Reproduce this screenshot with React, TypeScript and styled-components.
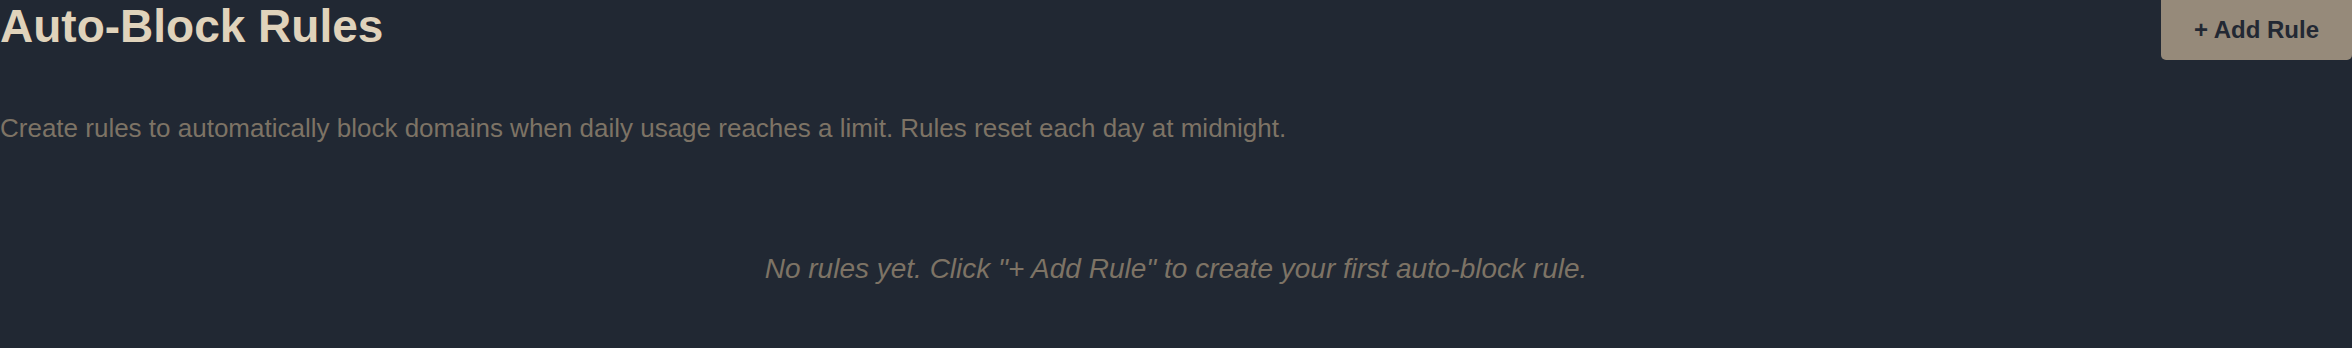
import React from "react";
import styled, { createGlobalStyle } from "styled-components";

const Global = createGlobalStyle`
  html, body {
    margin: 0;
    padding: 0;
    background: #212833;
  }
  body {
    font-family: "Liberation Sans", Arial, sans-serif;
  }
`;

const Page = styled.div`
  width: 2352px;
  height: 348px;
  background: #212833;
  box-sizing: border-box;
  overflow: hidden;
`;

const Header = styled.header`
  display: flex;
  justify-content: space-between;
  align-items: flex-start;
  height: 60px;
`;

const Title = styled.h1`
  margin: 0;
  font-size: 46px;
  font-weight: 700;
  line-height: 1.15;
  color: #e0d3bb;
`;

const AddButton = styled.button`
  height: 60px;
  padding: 0 33px;
  border: none;
  border-radius: 0 0 5px 5px;
  background: #968a7a;
  color: #222833;
  font-family: "Liberation Sans", Arial, sans-serif;
  font-size: 24px;
  font-weight: 700;
  cursor: pointer;
`;

const Description = styled.p`
  margin: 54px 0 0;
  font-size: 26px;
  line-height: 1.15;
  color: #7d7365;
`;

const EmptyState = styled.p`
  margin: 109px 0 0;
  text-align: center;
  font-size: 28px;
  font-style: italic;
  line-height: 1.15;
  color: #7d7365;
`;

export default function App() {
  return (
    <Page>
      <Global />
      <Header>
        <Title>Auto-Block Rules</Title>
        <AddButton>+ Add Rule</AddButton>
      </Header>
      <Description>
        Create rules to automatically block domains when daily usage reaches a limit. Rules reset each day at midnight.
      </Description>
      <EmptyState>
        No rules yet. Click "+ Add Rule" to create your first auto-block rule.
      </EmptyState>
    </Page>
  );
}
